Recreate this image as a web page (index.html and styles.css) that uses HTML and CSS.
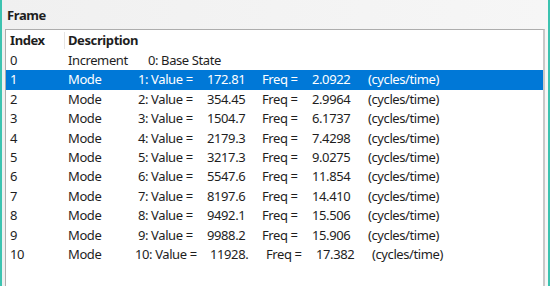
FILE: index.html
```html
<!DOCTYPE html>
<html lang="en">
<head>
    <meta charset="UTF-8">
    <title>Frame</title>
    <link rel="stylesheet" href="styles.css">
</head>
<body>
    <div class="window">
        <div class="group-title">Frame</div>

        <div class="list">
            <div class="list-head">
                <div class="col-index">Index</div>
                <div class="col-desc">Description</div>
            </div>

            <div class="row base">
                <span class="c-index">0</span>
                <span class="c-type">Increment</span>
                <span class="c-label">0: Base State</span>
            </div>
            <div class="row selected">
                <span class="c-index">1</span><span class="c-type">Mode</span><span class="c-label">1: Value =</span><span class="c-value">172.81</span><span class="c-freq">Freq =</span><span class="c-fval">2.0922</span><span class="c-unit">(cycles/time)</span>
            </div>
            <div class="row">
                <span class="c-index">2</span><span class="c-type">Mode</span><span class="c-label">2: Value =</span><span class="c-value">354.45</span><span class="c-freq">Freq =</span><span class="c-fval">2.9964</span><span class="c-unit">(cycles/time)</span>
            </div>
            <div class="row">
                <span class="c-index">3</span><span class="c-type">Mode</span><span class="c-label">3: Value =</span><span class="c-value">1504.7</span><span class="c-freq">Freq =</span><span class="c-fval">6.1737</span><span class="c-unit">(cycles/time)</span>
            </div>
            <div class="row">
                <span class="c-index">4</span><span class="c-type">Mode</span><span class="c-label">4: Value =</span><span class="c-value">2179.3</span><span class="c-freq">Freq =</span><span class="c-fval">7.4298</span><span class="c-unit">(cycles/time)</span>
            </div>
            <div class="row">
                <span class="c-index">5</span><span class="c-type">Mode</span><span class="c-label">5: Value =</span><span class="c-value">3217.3</span><span class="c-freq">Freq =</span><span class="c-fval">9.0275</span><span class="c-unit">(cycles/time)</span>
            </div>
            <div class="row">
                <span class="c-index">6</span><span class="c-type">Mode</span><span class="c-label">6: Value =</span><span class="c-value">5547.6</span><span class="c-freq">Freq =</span><span class="c-fval">11.854</span><span class="c-unit">(cycles/time)</span>
            </div>
            <div class="row">
                <span class="c-index">7</span><span class="c-type">Mode</span><span class="c-label">7: Value =</span><span class="c-value">8197.6</span><span class="c-freq">Freq =</span><span class="c-fval">14.410</span><span class="c-unit">(cycles/time)</span>
            </div>
            <div class="row">
                <span class="c-index">8</span><span class="c-type">Mode</span><span class="c-label">8: Value =</span><span class="c-value">9492.1</span><span class="c-freq">Freq =</span><span class="c-fval">15.506</span><span class="c-unit">(cycles/time)</span>
            </div>
            <div class="row">
                <span class="c-index">9</span><span class="c-type">Mode</span><span class="c-label">9: Value =</span><span class="c-value">9988.2</span><span class="c-freq">Freq =</span><span class="c-fval">15.906</span><span class="c-unit">(cycles/time)</span>
            </div>
            <div class="row wide">
                <span class="c-index">10</span><span class="c-type">Mode</span><span class="c-label">10: Value =</span><span class="c-value">11928.</span><span class="c-freq">Freq =</span><span class="c-fval">17.382</span><span class="c-unit">(cycles/time)</span>
            </div>
        </div>
    </div>
</body>
</html>
```

FILE: styles.css
```css
:root {
    --edge: #3cc3b0;
    --panel-bg: #f0f0f0;
    --list-border: #adadad;
    --text: #1e1e1e;
    --select: #0078d7;
}

html, body {
    margin: 0;
    height: 100%;
    overflow: hidden;
}

body {
    font-family: "Noto Sans", "Open Sans", sans-serif;
    font-size: 13px;
    letter-spacing: -0.4px;
    color: var(--text);
    background-color: var(--panel-bg);
}

.window {
    height: 286px;
    box-sizing: border-box;
    border-left: 2px solid var(--edge);
    border-right: 2px solid var(--edge);
    padding: 0 3px 0 3px;
    overflow: hidden;
    background: linear-gradient(to right, #f0f0f0, #f6f6f6);
}

.group-title {
    font-weight: bold;
    padding: 6px 0 0 2px;
    height: 29px;
    box-sizing: border-box;
    line-height: 18px;
}

.list {
    background-color: #fff;
    border-top: 1px solid var(--list-border);
    border-left: 1px solid var(--list-border);
    border-right: 2px solid #c8c8c8;
    height: 257px;
    box-sizing: border-box;
}

.list-head {
    display: flex;
    height: 21px;
    line-height: 21px;
    font-weight: bold;
}

.col-index {
    width: 54px;
    padding-left: 4px;
    border-right: 1px solid #e5e5e5;
    margin: 2px 0;
    line-height: 17px;
}

.col-desc {
    padding-left: 3px;
}

.row {
    display: flex;
    height: 19.4px;
    line-height: 19.4px;
    white-space: nowrap;
}

.row.selected {
    background-color: var(--select);
    color: #fff;
}

.c-index { width: 62px; padding-left: 4px; box-sizing: border-box; flex: none; }
.c-type  { width: 70px; flex: none; }
.c-label { width: 69px; flex: none; }
.c-value { width: 55px; flex: none; }
.c-freq  { width: 50px; flex: none; }
.c-fval  { width: 56px; flex: none; }

.row.base .c-label {
    padding-left: 10px;
}

.row.wide .c-label { width: 75px; margin-left: -3px; }
.row.wide .c-value { width: 56px; }
```
